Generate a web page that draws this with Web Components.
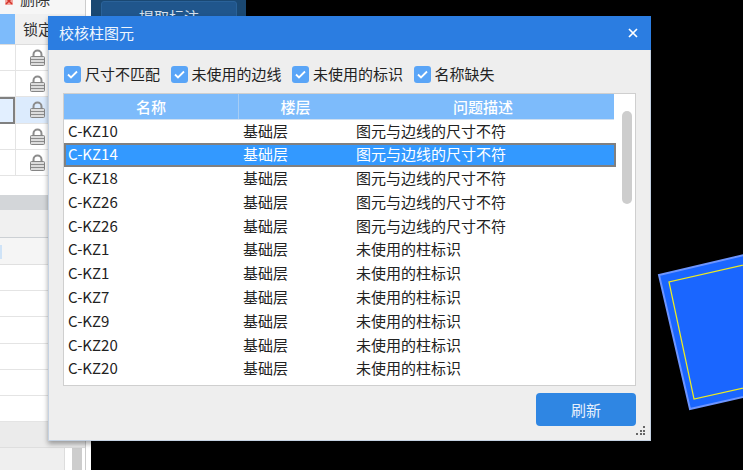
<!DOCTYPE html>
<html>
<head>
<meta charset="utf-8">
<title>校核柱图元</title>
<style>
  html, body { margin: 0; height: 100%; background: #000; overflow: hidden; }
  body { font-family: "Noto Sans CJK SC", "Liberation Sans", sans-serif; }
</style>
</head>
<body>
<app-desktop>
  <side-panel slot="side"></side-panel>
  <extract-button slot="canvas">提取标注</extract-button>
  <column-shape slot="canvas"></column-shape>
  <check-dialog slot="dialog" heading="校核柱图元"></check-dialog>
</app-desktop>

<script>
const LOCK = `<svg width="15" height="17" viewBox="0 0 15 17"><path d="M3.500 9V5.500a4 4 0 0 1 8 0V9" fill="none" stroke="#8c8c8c" stroke-width="2"/><rect x="0.500" y="7.500" width="14" height="9" rx="1" fill="#dcdcdc" stroke="#858585"/><path d="M1 10.500h13M1 13.500h13" stroke="#8c8c8c"/></svg>`;

class AppDesktop extends HTMLElement {
  constructor() {
    super();
    this.attachShadow({ mode: 'open' });
    this.shadowRoot.innerHTML = `
      <style>
        :host { display: flex; width: 743px; height: 470px; position: relative; overflow: hidden; background: #000; }
        .side { flex: 0 0 91px; }
        .canvas { flex: 1; position: relative; }
      </style>
      <div class="side"><slot name="side"></slot></div>
      <div class="canvas"><slot name="canvas"></slot></div>
      <slot name="dialog"></slot>
    `;
  }
}

class SidePanel extends HTMLElement {
  constructor() {
    super();
    this.attachShadow({ mode: 'open' });
    const locks = [0, 1, 2, 3, 4].map(i =>
      `<div class="row ${i === 2 ? 'sel' : ''}"><div class="a"></div><div class="b">${LOCK}</div></div>`).join('');
    const rows = [0, 1, 2, 3, 4, 5].map(() => '<div class="plain"></div>').join('');
    this.shadowRoot.innerHTML = `
      <style>
        :host { display: flex; width: 91px; height: 470px; background: #fff; font-size: 15px; color: #333; overflow: hidden; }
        .main { flex: 0 0 85px; display: flex; flex-direction: column; min-width: 0; }
        .edge { flex: 1; border-left: 1px solid #cccccc; background: #fff; }
        .tools { height: 14px; background: #f6f6f6; padding-left: 5px; display: flex; gap: 7px; overflow: hidden; flex: none; }
        .tools svg { flex: none; }
        .tools span { display: block; line-height: 15px; margin-top: -9px; }
        .head { height: 31px; display: flex; flex: none; background: #f0f0f0; border-bottom: 1px solid #ddd; box-sizing: border-box; }
        .head .a { width: 15px; background: #7dbbfb; }
        .head .b { padding-left: 8px; line-height: 29px; }
        .row { height: 26.2px; display: flex; border-bottom: 1px solid #e4e4e4; box-sizing: border-box; flex: none; }
        .row .a { width: 15px; box-sizing: border-box; }
        .row .b { flex: 1; padding-left: 14px; display: flex; align-items: center; border-left: 1px solid #e4e4e4; }
        .row.sel { background: #dcebfd; }
        .row.sel .a { border: 2px solid #808080; border-left: 0; height: 27px; background: #e2efff; }
        .gap { height: 19px; flex: none; }
        .bar { height: 15px; background: #d3d6d9; flex: none; }
        .sub { height: 28px; background: #f0f0f0; border-bottom: 1px solid #ccd0d4; box-sizing: border-box; flex: none; }
        .mark { height: 27px; background: #f5f5f5; border-bottom: 1px solid #e0e0e0; box-sizing: border-box; flex: none; padding-top: 7px; }
        .mark i { display: block; width: 2px; height: 14px; background: #cfe3f7; }
        .plain { height: 26.2px; border-bottom: 1px solid #e4e4e4; box-sizing: border-box; flex: none; }
        .foot { height: 26px; background: #ebebeb; border-bottom: 1px solid #dedede; box-sizing: border-box; flex: none; }
        .rest { flex: 1; display: flex; }
        .rest i { flex: 0 0 65px; background: #efefef; border-right: 1px solid #ddd; box-sizing: border-box; }
        .rest b { flex: 0 0 7px; }
        .rest u { flex: 0 0 10px; background: #cdcdcd; }
      </style>
      <div class="main">
        <div class="tools">
          <svg width="8" height="5" viewBox="0 0 8 5"><rect width="8" height="5" fill="#f3a6a0"/><path d="M1 -2l6 6M7 -2l-6 6" stroke="#d4342a" stroke-width="1.500"/></svg>
          <span>删除</span>
        </div>
        <div class="head"><div class="a"></div><div class="b">锁定</div></div>
        ${locks}
        <div class="gap"></div>
        <div class="bar"></div>
        <div class="sub"></div>
        <div class="mark"><i></i></div>
        ${rows}
        <div class="foot"></div>
        <div class="rest"><i></i><b></b><u></u></div>
      </div>
      <div class="edge"></div>
    `;
  }
}

class ExtractButton extends HTMLElement {
  constructor() {
    super();
    this.attachShadow({ mode: 'open' });
    this.shadowRoot.innerHTML = `
      <style>
        :host { display: block; width: 155px; height: 40px; background: #1a4872; padding: 1px 9px 0 10px; box-sizing: border-box; }
        div { height: 30px; background: #20568c; border: 1px solid #2a6299; border-radius: 3px; box-sizing: border-box; color: #d5e0ec; font-size: 15px; line-height: 29px; text-align: center; }
      </style>
      <div><slot></slot></div>
    `;
  }
}

class ColumnShape extends HTMLElement {
  constructor() {
    super();
    this.attachShadow({ mode: 'open' });
    this.shadowRoot.innerHTML = `
      <style>
        :host { display: block; position: absolute; left: 560px; top: 240px; width: 92px; height: 230px; }
      </style>
      <svg width="92" height="230" viewBox="0 0 92 230">
        <polygon points="8,35 39,169 110,153 110,11" fill="#1a66ff" stroke="#6d95ff" stroke-width="2"/>
        <polygon points="18,42 43,159 110,144 110,21" fill="none" stroke="#eeec20" stroke-width="1.200"/>
      </svg>
    `;
  }
}

class CheckBox extends HTMLElement {
  constructor() {
    super();
    this.attachShadow({ mode: 'open' });
    this.shadowRoot.innerHTML = `
      <style>
        :host { display: inline-flex; align-items: center; gap: 4px; font-size: 15px; color: #222; }
        .box { width: 17px; height: 17px; border-radius: 3px; background: #5aa5f7; display: flex; align-items: center; justify-content: center; }
        .label { margin-top: -2px; }
      </style>
      <span class="box"><svg width="11" height="9" viewBox="0 0 11 9"><path d="M1 4.500l3 3 6-6" fill="none" stroke="#fff" stroke-width="1.800"/></svg></span>
      <span class="label"><slot></slot></span>
    `;
  }
}

class ResultTable extends HTMLElement {
  constructor() {
    super();
    this.attachShadow({ mode: 'open' });
    const long = '图元与边线的尺寸不符', short = '未使用的柱标识';
    const data = [
      ['C-KZ10', long], ['C-KZ14', long], ['C-KZ18', long], ['C-KZ26', long], ['C-KZ26', long],
      ['C-KZ1', short], ['C-KZ1', short], ['C-KZ7', short], ['C-KZ9', short], ['C-KZ20', short], ['C-KZ20', short]
    ];
    const rows = data.map((d, i) => `
      <div class="row ${i === 1 ? 'sel' : ''}"><span>${d[0]}</span><span>基础层</span><span>${d[1]}</span></div>`).join('');
    this.shadowRoot.innerHTML = `
      <style>
        :host { display: flex; height: 293px; background: #fff; border: 1px solid #cfcfcf; box-sizing: border-box; overflow: hidden; }
        .main { width: 550px; flex: none; }
        .head { display: grid; grid-template-columns: 174px 114px 262px; height: 25.5px; background: #7dbbfb; color: #fff; font-size: 15px; font-weight: 500; line-height: 25px; text-align: center; border-bottom: 1px solid #cfdff0; box-sizing: border-box; }
        .head span:nth-child(2) { border-left: 1px solid #a6cdf5; }
        .row { display: grid; grid-template-columns: 175px 113px 1fr; height: 23.8px; line-height: 22px; font-size: 15px; color: #222; padding-left: 4px; box-sizing: border-box; margin-right: -2px; white-space: nowrap; }
        .row.sel { background: #3399ff; color: #fff; outline: 2px solid #808080; outline-offset: -2px; }
        .bar { flex: 1; position: relative; }
        .thumb { position: absolute; left: 8px; top: 17px; width: 10px; height: 93px; border-radius: 5px; background: #cdcdcd; }
      </style>
      <div class="main">
        <div class="head"><span>名称</span><span>楼层</span><span>问题描述</span></div>
        ${rows}
      </div>
      <div class="bar"><div class="thumb"></div></div>
    `;
  }
}

class CheckDialog extends HTMLElement {
  constructor() {
    super();
    this.attachShadow({ mode: 'open' });
    this.shadowRoot.innerHTML = `
      <style>
        :host { display: flex; flex-direction: column; position: absolute; left: 48px; top: 16px; width: 603px; height: 425px; box-sizing: border-box; background: #eeeeee; border: 1px solid #c5d2e2; border-top: 0; box-shadow: 0 3px 5px rgba(0,0,0,.35); font-size: 15px; }
        .title { height: 34px; flex: none; margin: 0 -1px; background: #2b7de1; color: #eef5fd; display: flex; align-items: center; justify-content: space-between; padding: 0 13px 0 11px; }
        .title span { margin-top: -2px; }
        .filters { display: flex; gap: 10.5px; padding: 11px 15px 0; height: 26px; flex: none; align-items: center; }
        .body { padding: 6px 14px 0; }
        .foot { display: flex; justify-content: flex-end; padding: 7px 14px 0 0; }
        button { width: 100px; height: 33px; background: #2f86e3; color: #e6f0fc; border: 0; border-radius: 4px; font: inherit; }
        .grip { position: absolute; right: 4px; bottom: 4px; display: block; }
      </style>
      <div class="title"><span></span>
        <svg width="10" height="10" viewBox="0 0 10 10"><path d="M1 1l8 8M9 1l-8 8" stroke="#fff" stroke-width="1.700"/></svg>
      </div>
      <div class="filters">
        <check-box>尺寸不匹配</check-box>
        <check-box>未使用的边线</check-box>
        <check-box>未使用的标识</check-box>
        <check-box>名称缺失</check-box>
      </div>
      <div class="body"><result-table></result-table></div>
      <div class="foot"><button>刷新</button></div>
      <svg class="grip" width="10" height="10" viewBox="0 0 10 10" fill="#666"><rect x="7" y="0" width="2" height="2"/><rect x="4" y="4" width="2" height="2"/><rect x="7" y="4" width="2" height="2"/><rect x="0" y="7" width="2" height="2"/><rect x="4" y="7" width="2" height="2"/><rect x="7" y="7" width="2" height="2"/></svg>
    `;
    this.shadowRoot.querySelector('.title span').textContent = this.getAttribute('heading');
  }
}

customElements.define('app-desktop', AppDesktop);
customElements.define('side-panel', SidePanel);
customElements.define('extract-button', ExtractButton);
customElements.define('column-shape', ColumnShape);
customElements.define('check-box', CheckBox);
customElements.define('result-table', ResultTable);
customElements.define('check-dialog', CheckDialog);
</script>
</body>
</html>
